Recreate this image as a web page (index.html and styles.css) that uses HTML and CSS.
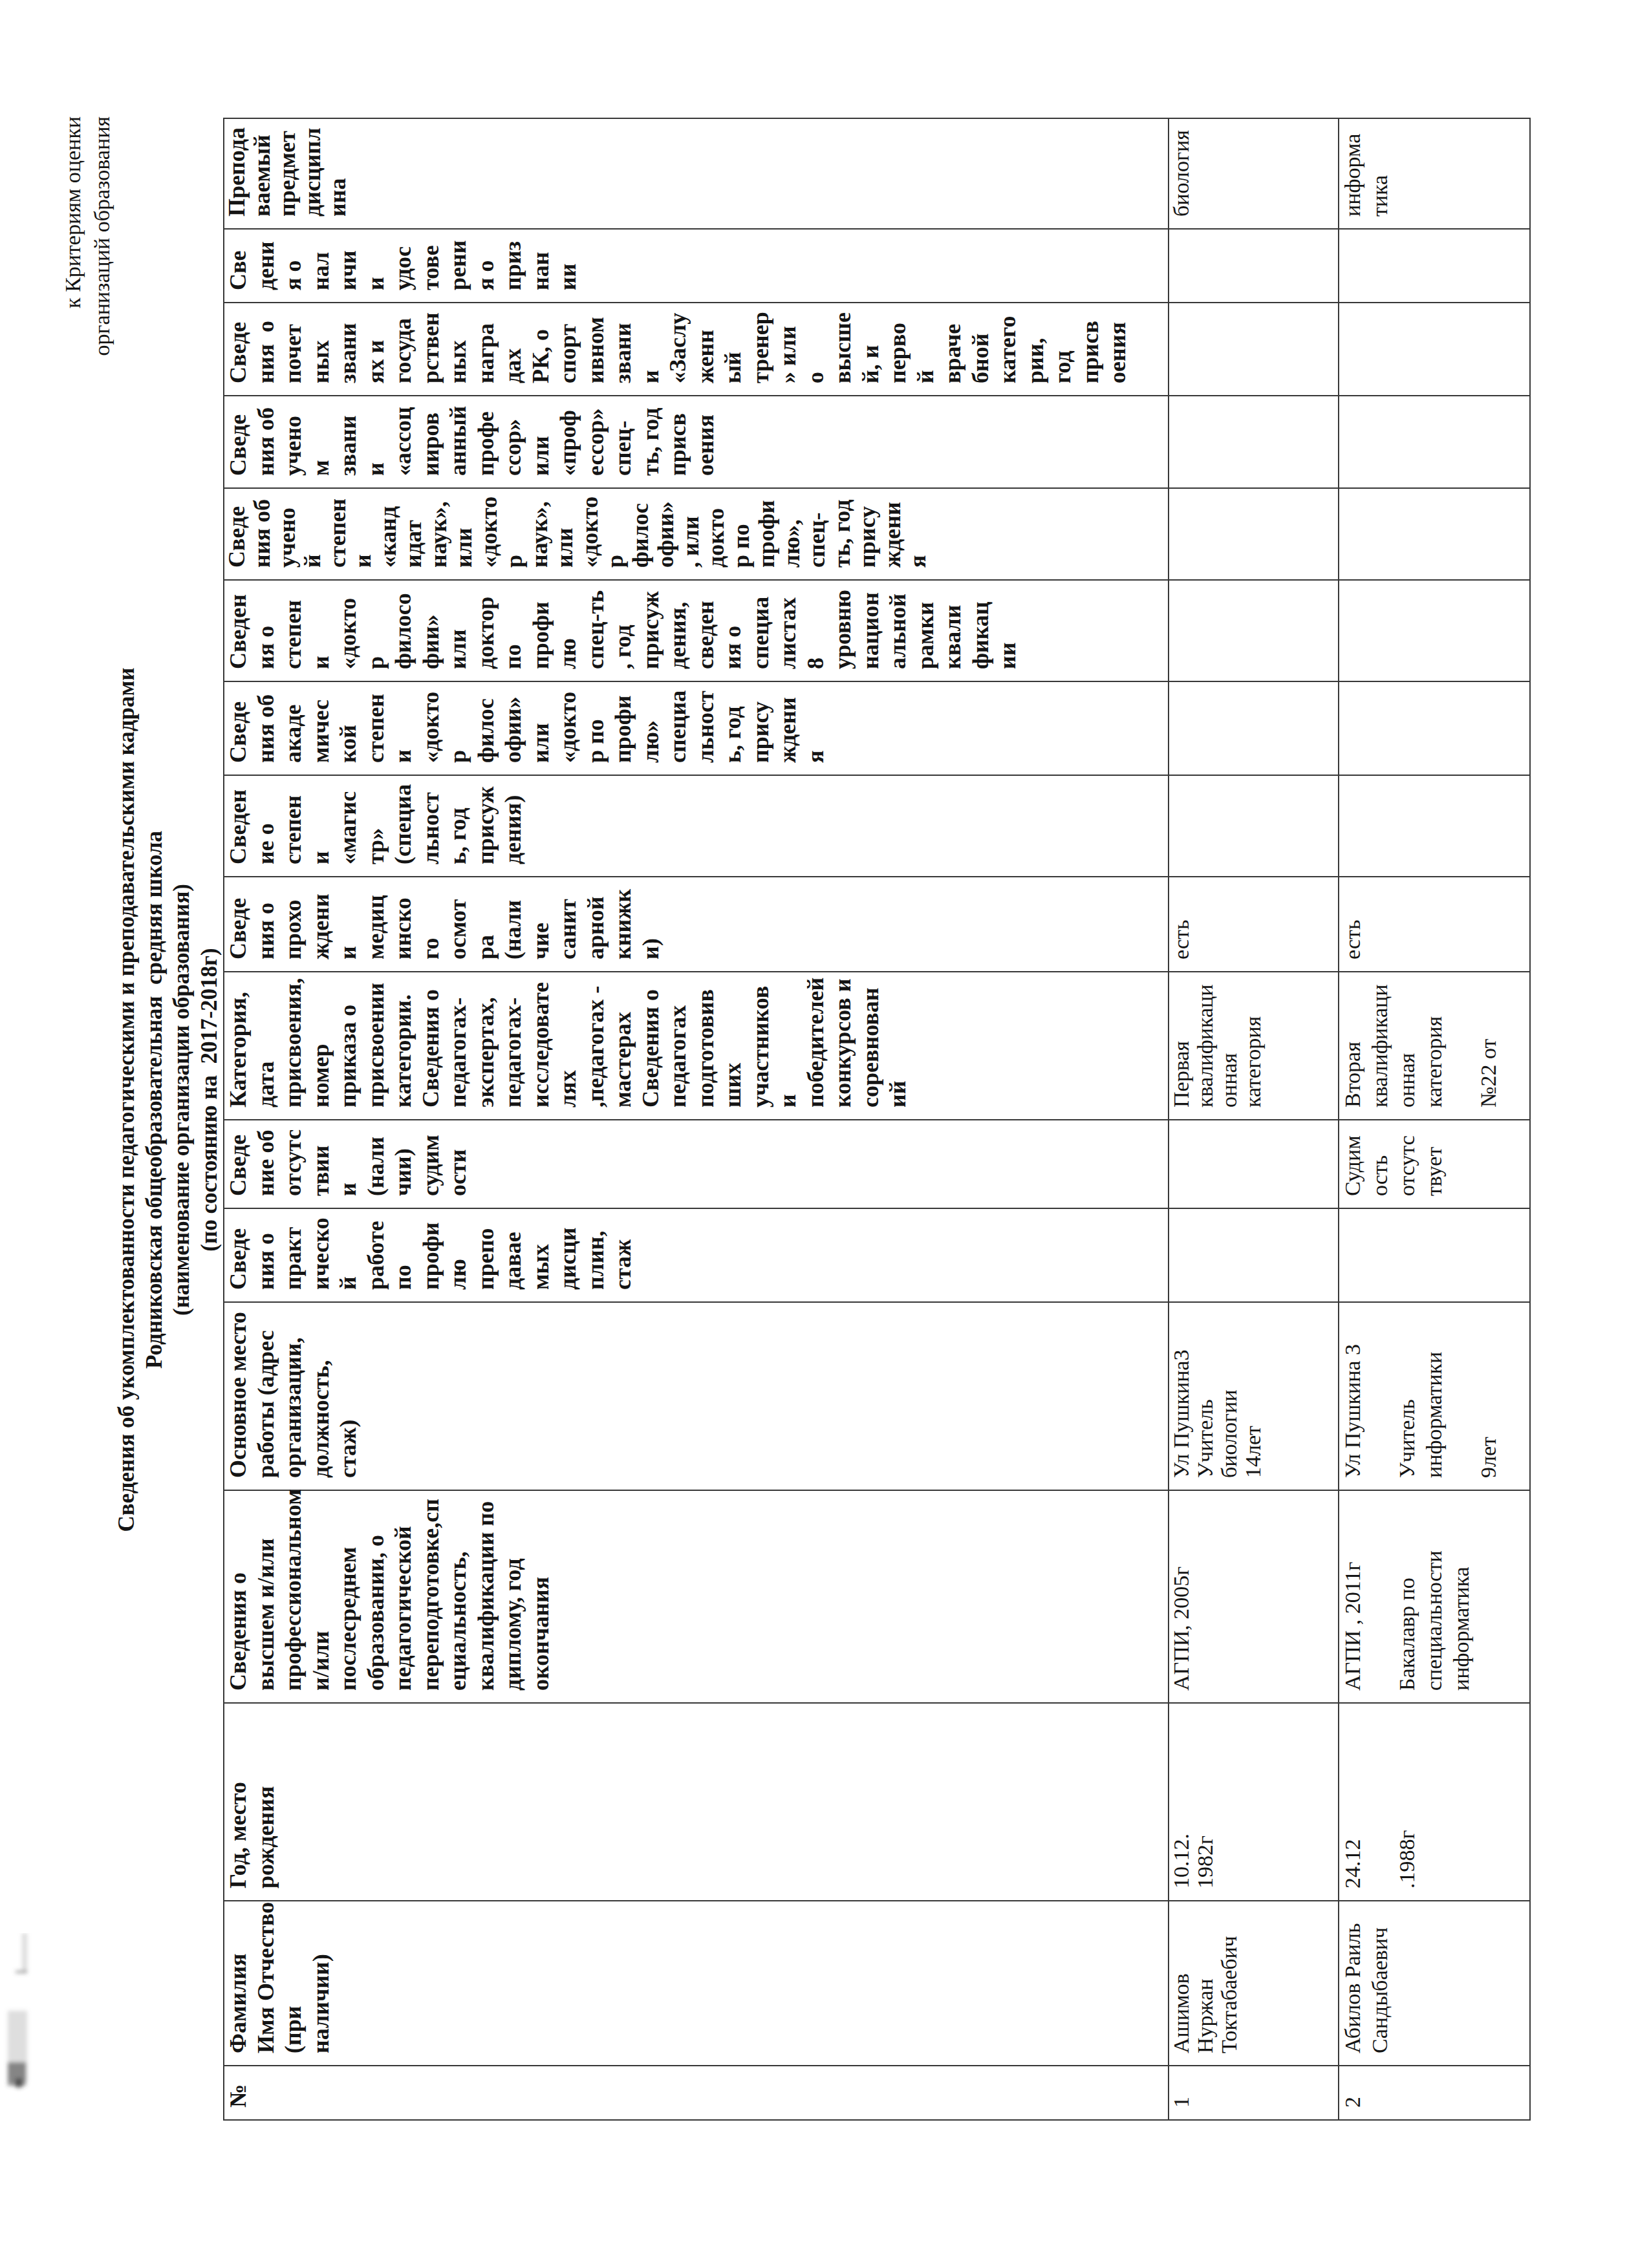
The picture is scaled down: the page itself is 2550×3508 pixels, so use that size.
FILE: index.html
```html
<!DOCTYPE html>
<html lang="ru">
<head>
<meta charset="utf-8">
<title>Сведения об укомплектованности педагогическими кадрами</title>
<link rel="stylesheet" href="styles.css">
</head>
<body>
<div class="sheet">
  <div class="page">
    <div class="note">к Критериям оценки<br>организаций образования</div>
    <div class="title">
      <p>Сведения об укомплектованности педагогическими и преподавательскими кадрами</p>
      <p>Родниковская общеобразовательная&nbsp; средняя школа</p>
      <p>(наименование организации образования)</p>
      <p>(по состоянию на&nbsp; 2017-2018г)</p>
    </div>
    <table class="staff">
      <colgroup>
        <col class="w1"><col class="w2"><col class="w3"><col class="w4"><col class="w5"><col class="w6"><col class="w7"><col class="w8"><col class="w9"><col class="w10"><col class="w11"><col class="w12"><col class="w13"><col class="w14"><col class="w15"><col class="w16"><col class="w17">
      </colgroup>
      <tr class="hdr">
        <td>№</td>
        <td>Фамилия<br>Имя Отчество<br>(при<br>наличии)</td>
        <td>Год, место<br>рождения</td>
        <td>Сведения о<br>высшем и/или<br>профессиональном<br>и/или<br>послесреднем<br>образовании, о<br>педагогической<br>переподготовке,сп<br>ециальность,<br>квалификации по<br>диплому, год<br>окончания</td>
        <td>Основное место<br>работы (адрес<br>организации,<br>должность,<br>стаж)</td>
        <td>Сведе<br>ния о<br>практ<br>ическо<br>й<br>работе<br>по<br>профи<br>лю<br>препо<br>давае<br>мых<br>дисци<br>плин,<br>стаж</td>
        <td>Сведе<br>ние об<br>отсутс<br>твии<br>и<br>(нали<br>чии)<br>судим<br>ости</td>
        <td>Категория,<br>дата<br>присвоения,<br>номер<br>приказа о<br>присвоении<br>категории.<br>Сведения о<br>педагогах-<br>экспертах,<br>педагогах-<br>исследовате<br>лях<br>,педагогах -<br>мастерах<br>Сведения о<br>педагогах<br>подготовив<br>ших<br>участников<br>и<br>победителей<br>конкурсов и<br>соревнован<br>ий</td>
        <td>Сведе<br>ния о<br>прохо<br>ждени<br>и<br>медиц<br>инско<br>го<br>осмот<br>ра<br>(нали<br>чие<br>санит<br>арной<br>книжк<br>и)</td>
        <td>Сведен<br>ие о<br>степен<br>и<br>«магис<br>тр»<br>(специа<br>льност<br>ь, год<br>присуж<br>дения)</td>
        <td>Сведе<br>ния об<br>акаде<br>мичес<br>кой<br>степен<br>и<br>«докто<br>р<br>филос<br>офии»<br>или<br>«докто<br>р по<br>профи<br>лю»<br>специа<br>льност<br>ь, год<br>прису<br>ждени<br>я</td>
        <td>Сведен<br>ия о<br>степен<br>и<br>«докто<br>р<br>филосо<br>фии»<br>или<br>доктор<br>по<br>профи<br>лю<br>спец-ть<br>, год<br>присуж<br>дения,<br>сведен<br>ия о<br>специа<br>листах<br>8<br>уровню<br>национ<br>альной<br>рамки<br>квали<br>фикац<br>ии</td>
        <td class="tight">Сведе<br>ния об<br>учено<br>й<br>степен<br>и<br>«канд<br>идат<br>наук»,<br>или<br>«докто<br>р<br>наук»,<br>или<br>«докто<br>р<br>филос<br>офии»<br>, или<br>докто<br>р по<br>профи<br>лю»,<br>спец-<br>ть, год<br>прису<br>ждени<br>я</td>
        <td>Сведе<br>ния об<br>учено<br>м<br>звани<br>и<br>«ассоц<br>ииров<br>анный<br>профе<br>ссор»<br>или<br>«проф<br>ессор»<br>спец-<br>ть, год<br>присв<br>оения</td>
        <td>Сведе<br>ния&nbsp; о<br>почет<br>ных<br>звани<br>ях и<br>госуда<br>рствен<br>ных<br>награ<br>дах<br>РК, о<br>спорт<br>ивном<br>звани<br>и<br>«Заслу<br>женн<br>ый<br>тренер<br>» или<br>о<br>высше<br>й, и<br>перво<br>й<br>враче<br>бной<br>катего<br>рии,<br>год<br>присв<br>оения</td>
        <td>Све<br>дени<br>я о<br>нал<br>ичи<br>и<br>удос<br>тове<br>рени<br>я о<br>приз<br>нан<br>ии</td>
        <td class="tight">Препода<br>ваемый<br>предмет<br>дисципл<br>ина</td>
      </tr>
      <tr class="row1">
        <td>1</td>
        <td>Ашимов<br>Нуржан<br>Токтабаебич</td>
        <td>10.12.<br>1982г</td>
        <td>АГПИ, 2005г</td>
        <td>Ул Пушкина3<br>Учитель<br>биологии<br>14лет</td>
        <td></td>
        <td></td>
        <td>Первая<br>квалификаци<br>онная<br>категория</td>
        <td>есть</td>
        <td></td>
        <td></td>
        <td></td>
        <td></td>
        <td></td>
        <td></td>
        <td></td>
        <td>биология</td>
      </tr>
      <tr class="row2">
        <td>2</td>
        <td>Абилов Раиль<br>Сандыбаевич</td>
        <td>24.12<br><br>.1988г</td>
        <td>АГПИ , 2011г<br><br>Бакалавр по<br>специальности<br>информатика</td>
        <td>Ул Пушкина 3<br><br>Учитель<br>информатики<br><br>9лет</td>
        <td></td>
        <td>Судим<br>ость<br>отсутс<br>твует</td>
        <td>Вторая<br>квалификаци<br>онная<br>категория<br><br>№22 от</td>
        <td>есть</td>
        <td></td>
        <td></td>
        <td></td>
        <td></td>
        <td></td>
        <td></td>
        <td></td>
        <td>информа<br>тика</td>
      </tr>
    </table>
  </div>
  <svg class="smudge" width="60" height="300" viewBox="0 0 60 300" aria-hidden="true">
    <defs>
      <filter id="blur" x="-50%" y="-20%" width="200%" height="140%">
        <feGaussianBlur stdDeviation="3"/>
      </filter>
    </defs>
    <g filter="url(#blur)">
      <rect x="34" y="0" width="8" height="60" fill="#9a9a9a" opacity="0.35"/>
      <rect x="24" y="58" width="18" height="4" fill="#6a6a6a" opacity="0.6"/>
      <rect x="12" y="120" width="30" height="110" fill="#a0a0a0" opacity="0.35"/>
      <rect x="12" y="200" width="28" height="36" fill="#4a4a4a" opacity="0.6"/>
      <rect x="24" y="225" width="10" height="14" fill="#333333" opacity="0.7"/>
    </g>
  </svg>
</div>
</body>
</html>
```

FILE: styles.css
```css
html, body {
  margin: 0;
  padding: 0;
  background: #ffffff;
}

.sheet {
  position: relative;
  width: 2550px;
  height: 3508px;
  overflow: hidden;
  background: #ffffff;
}

/* landscape page, turned a quarter to the left as in the scan */
.page {
  width: 3508px;
  height: 2550px;
  box-sizing: border-box;
  padding: 90px 184px 0 228px;
  transform-origin: 0 0;
  transform: translateY(3508px) rotate(-90deg);
  font-family: "Liberation Serif", "Times New Roman", serif;
  color: #141414;
}

/* scanner edge shadow lying over the page margin */
.smudge {
  position: absolute;
  left: 0;
  top: 2990px;
}

.note {
  text-align: right;
  font-size: 34px;
  line-height: 45px;
  height: 85px;
  margin-right: -4px;
}

.title {
  text-align: center;
  font-weight: bold;
  font-size: 35px;
  line-height: 42.5px;
  padding-left: 62px;
}

.title p {
  margin: 0;
}

.staff {
  border-collapse: collapse;
  table-layout: fixed;
  width: 3096px;
}

.staff td {
  border: 2px solid #383838;
  vertical-align: top;
  text-align: left;
  padding: 0 4px 0 18px;
  white-space: nowrap;
  overflow: visible;
}

.w1 { width: 84px; }
.w2 { width: 255px; }
.w3 { width: 306px; }
.w4 { width: 329px; }
.w5 { width: 291px; }
.w6 { width: 145px; }
.w7 { width: 137px; }
.w8 { width: 229px; }
.w9 { width: 147px; }
.w10 { width: 157px; }
.w11 { width: 145px; }
.w12 { width: 157px; }
.w13 { width: 142px; }
.w14 { width: 143px; }
.w15 { width: 144px; }
.w16 { width: 114px; }
.w17 { width: 171px; }

.hdr td {
  font-weight: bold;
  font-size: 36px;
  line-height: 42.5px;
  height: 1459px;
}

.hdr td.tight {
  line-height: 39px;
}

.row1 td {
  font-size: 34px;
  line-height: 37px;
  height: 261px;
}

.row2 td {
  font-size: 34px;
  line-height: 42px;
  height: 294px;
}
```
